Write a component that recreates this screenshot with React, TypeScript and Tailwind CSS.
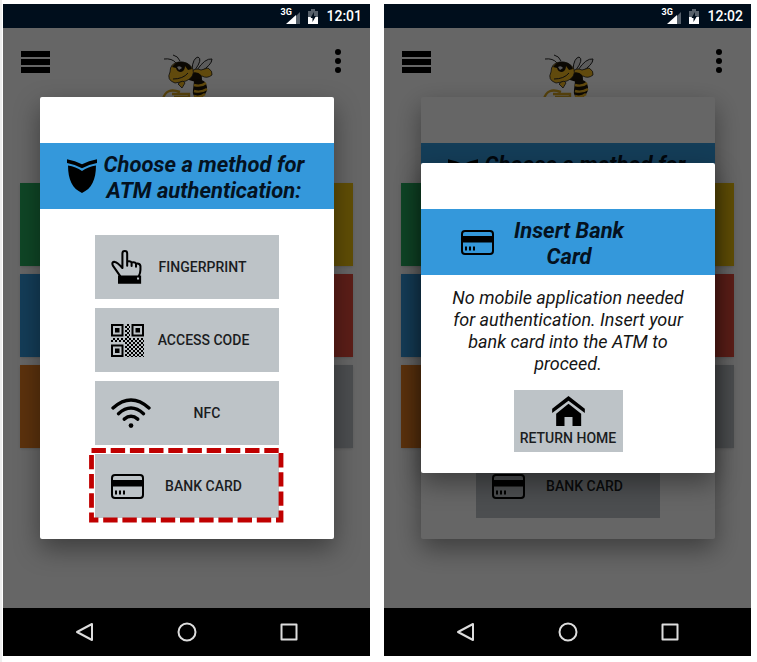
import type { ReactNode } from "react";

function CardIcon() {
  return (
    <svg width="33" height="25" viewBox="0 0 33 25" className="shrink-0" aria-hidden="true">
      <rect x="1" y="1" width="31" height="23" rx="3" fill="none" stroke="#000" strokeWidth="2" />
      <rect x="1" y="6" width="31" height="6.5" />
      <path d="M5 16.5v4M9 16.5v4M13 16.5v4" stroke="#000" strokeWidth="2" />
    </svg>
  );
}

function PointerIcon() {
  return (
    <svg width="31" height="34" viewBox="0 0 90 100" className="shrink-0" aria-hidden="true">
      <path
        d="M26 76 5 46Q0 34 11 35 18 36 33 53V10Q33 3 40 3 47 3 47 10V34Q57 31 60 37 70 34 73 40 84 38 86 47V58Q86 68 81 77M47 32V46M60 36V47M73 39V49"
        fill="none"
        stroke="#000"
        strokeWidth="6"
        strokeLinejoin="round"
        strokeLinecap="round"
      />
      <path fillRule="evenodd" d="M20 75H88V99H20ZM76 81V87H82V81Z" />
    </svg>
  );
}

function Finder({ x, y }: { x: number; y: number }) {
  return (
    <g transform={`translate(${x} ${y})`}>
      <rect x="1" y="1" width="10.5" height="10.5" fill="none" stroke="#000" strokeWidth="2" />
      <rect x="4" y="4" width="4.5" height="4.5" />
    </g>
  );
}

function QrIcon() {
  return (
    <svg width="33" height="33" viewBox="0 0 33 33" className="shrink-0" aria-hidden="true">
      <defs>
        <pattern id="checks" width="4" height="4" patternUnits="userSpaceOnUse">
          <path d="M0 0h2v2h2v2h-2v-2h-2z" />
        </pattern>
      </defs>
      <Finder x={0} y={0} />
      <Finder x={20.5} y={0} />
      <Finder x={0} y={20.5} />
      <path fill="url(#checks)" d="M14 0h5v14h-5zM0 14h33v4h-33zM14 18h19v15h-19z" />
    </svg>
  );
}

function WifiIcon() {
  return (
    <svg width="40" height="30" viewBox="0 0 118 88" className="shrink-0" aria-hidden="true">
      <g fill="none" stroke="#000" strokeWidth="10" strokeLinecap="round">
        <path d="M6 29Q59-18 112 29" />
        <path d="M22 46Q59 13 96 46" />
        <path d="M39 62Q59 45 79 62" />
      </g>
      <circle cx="59" cy="81" r="7" />
    </svg>
  );
}

function ShieldIcon() {
  return (
    <svg width="30" height="34" viewBox="0 0 88 99" className="shrink-0" aria-hidden="true">
      <path d="M0 0Q24 4 44 15 64 4 88 0V11Q64 15 44 27 24 15 0 11Z" />
      <path d="M3 19Q26 22 44 35 62 22 85 19C85 60 72 88 44 99 16 88 3 60 3 19Z" />
    </svg>
  );
}

function HouseIcon() {
  return (
    <svg width="33" height="30" viewBox="0 0 98 90" aria-hidden="true">
      <path d="M49 0 98 38V51L49 14 0 51V38Z" />
      <path d="M49 23 87 53V90H61V63H37V90H12V53Z" />
    </svg>
  );
}

function BeeLogo() {
  return (
    <svg width="63" height="55" viewBox="0 0 63 55" aria-hidden="true">
      <g fill="none" stroke="#222" strokeWidth="1">
        <path d="M21 18Q17 13 9 14M25 16Q23 11 18 10" />
        <path d="M37 24Q38 13 43 12 48 14 40 25M42 25Q50 13 57 14 57 20 45 27" fill="#e4e4e4" />
      </g>
      <path d="M35 28Q40 22 46 25L53 23Q58 26 57 30 52 34 47 31L40 34Z" fill="#f2b822" stroke="#222" strokeWidth=".8" />
      <path d="M33 29Q42 25 46 30 49 35 44 38L34 35Z" fill="#1c1408" />
      <path d="M39 36Q50 32 52 42 53 50 42 55 37 50 38 45Z" fill="#1c1408" />
      <path d="M39 40Q46 42 51 38M39 46Q46 48 52 44M39 51Q45 53 50 49" fill="none" stroke="#f2b822" strokeWidth="2.4" />
      <path d="M15 27Q15 18 24 17 33 16 38 24 40 32 31 36L20 38Q11 35 15 27Z" fill="#f2b822" stroke="#222" strokeWidth=".8" />
      <path d="M17 22Q21 16 28 17 35 18 37 24L33 25 30 21Q30 26 26 27 22 27 21 23Z" fill="#1c1408" />
      <path d="M22 22Q25 20 27 23L24 25Z" fill="#ddd" />
      <path d="M18 34Q28 34 33 28" fill="none" stroke="#222" strokeWidth="1" />
      <path d="M23 39Q28 34 30 38L27 43Z" fill="#f2b822" stroke="#222" strokeWidth=".8" />
      <path d="M25 47Q11 42 8 54M17 49H34V52H19" fill="none" stroke="#d8a620" strokeWidth="2.4" />
    </svg>
  );
}

function StatusBar({ time }: { time: string }) {
  return (
    <header className="flex h-6 items-center justify-end bg-[#000e1c] pr-2 text-white">
      <div className="relative mr-2 h-4 w-5">
        <span className="absolute left-0 top-0 text-[9px] leading-[9px] font-bold">3G</span>
        <svg width="15" height="12" viewBox="0 0 15 12" className="absolute right-0 bottom-0" aria-hidden="true">
          <path d="M15 0V12H11V4Z" fill="#56606a" />
          <path d="M11 3V12H1Z" fill="#fff" />
        </svg>
      </div>
      <svg width="10" height="15" viewBox="0 0 10 15" className="mr-2" aria-hidden="true">
        <path d="M3 0H7V2H10V8H0V2H3Z" fill="#56606a" />
        <path d="M0 8H10V15H0Z" fill="#fff" />
        <path d="M6 3 2.5 9H4.5V13L8 7H6Z" fill="#000e1c" />
      </svg>
      <span className="text-sm leading-6 font-medium">{time}</span>
    </header>
  );
}

function HomeScreen() {
  const tiles = [
    "bg-[#27ae60]",
    "bg-[#f1c40f]",
    "bg-[#3498db]",
    "bg-[#e74c3c]",
    "bg-[#e67e22]",
    "bg-[#bdc3c7]",
  ];
  return (
    <div className="col-start-1 row-start-1 bg-white">
      <div className="grid h-[155px] grid-cols-[1fr_auto_1fr] items-start pt-[17px] pr-[29px] pl-[18px]">
        <button aria-label="Menu" className="mt-1.5 flex w-[29px] flex-col gap-[2px]">
          <span className="h-1.5 w-full bg-black" />
          <span className="h-1.5 w-full bg-black" />
          <span className="h-1.5 w-full bg-black" />
        </button>
        <div className="ml-[11px]">
          <BeeLogo />
        </div>
        <button aria-label="More options" className="mt-1 flex flex-col gap-[3px] justify-self-end">
          <span className="size-1.5 rounded-full bg-black" />
          <span className="size-1.5 rounded-full bg-black" />
          <span className="size-1.5 rounded-full bg-black" />
        </button>
      </div>
      <div className="grid grid-cols-2 gap-2 px-[17px]">
        {tiles.map((tile) => (
          <div key={tile} className={`h-[83px] shadow-sm ${tile}`} />
        ))}
      </div>
    </div>
  );
}

function Scrim() {
  return <div className="isolate col-start-1 row-start-1 bg-black/60" />;
}

function Dialog({ icon, title, bandClass, titleClass, children }: {
  icon: ReactNode;
  title: string;
  bandClass: string;
  titleClass: string;
  children: ReactNode;
}) {
  return (
    <section className="isolate col-start-1 row-start-1 mr-9 ml-[37px] self-center rounded-xs bg-white pt-[46px] pb-[21px] shadow-[0_10px_26px_rgba(0,0,0,0.4)]">
      <div className={`flex h-[66px] items-center bg-[#3498db] ${bandClass}`}>
        {icon}
        <h2 className={`pt-1 text-center text-[22px] leading-[26px] font-bold text-[#04121f] italic ${titleClass}`}>{title}</h2>
      </div>
      {children}
    </section>
  );
}

function MethodButton({ icon, label, marked }: { icon: ReactNode; label: string; marked?: boolean }) {
  return (
    <button className={`flex h-16 w-full items-center bg-[#bdc3c7] px-4 text-sm font-medium text-[#1b1d1f] ${marked ? "relative" : ""}`}>
      {icon}
      <span className="flex-1 text-center">{label}</span>
      {marked && (
        <svg width="195" height="75" viewBox="0 0 195 75" className="absolute -top-1.5 -left-1.5 max-w-none" aria-hidden="true">
          <rect x="2.5" y="2.5" width="189.5" height="69.5" fill="none" stroke="#c00000" strokeWidth="4.8" strokeDasharray="14.4 4.8" />
        </svg>
      )}
    </button>
  );
}

/* When another dialog lies on top, the rows beneath it are hidden but keep their space. */
function MethodDialog({ marked, covered }: { marked?: boolean; covered?: boolean }) {
  return (
    <Dialog icon={<ShieldIcon />} title="Choose a method for ATM authentication:" bandClass="justify-center gap-1" titleClass="w-[206px]">
      <div className="mx-auto flex w-[184px] flex-col gap-[9px] pt-[26px]">
        <div className={`flex flex-col gap-[9px] ${covered ? "invisible" : ""}`}>
          <MethodButton icon={<PointerIcon />} label="FINGERPRINT" />
          <MethodButton icon={<QrIcon />} label="ACCESS CODE" />
          <MethodButton icon={<WifiIcon />} label="NFC" />
        </div>
        <MethodButton icon={<CardIcon />} label="BANK CARD" marked={marked} />
      </div>
    </Dialog>
  );
}

function InsertCardDialog() {
  return (
    <Dialog icon={<CardIcon />} title="Insert Bank Card" bandClass="pl-10" titleClass="ml-2.5 w-[130px]">
      <p className="px-6 pt-3 text-center text-lg leading-[22px] text-[#151515] italic">
        No mobile application needed for authentication. Insert your bank card into the ATM to proceed.
      </p>
      <button className="mx-auto mt-[15px] flex h-[62px] w-[109px] flex-col items-center bg-[#bdc3c7] pt-1.5 text-sm leading-6 font-medium text-[#1b1d1f]">
        <HouseIcon />
        RETURN HOME
      </button>
    </Dialog>
  );
}

function NavBar() {
  return (
    <nav className="flex h-12 items-center justify-center bg-black">
      <button aria-label="Back" className="flex w-[102px] justify-center">
        <svg width="20" height="20" viewBox="0 0 20 20" fill="none" stroke="#ddd" strokeWidth="2" strokeLinejoin="round">
          <path d="M17 2V18L2 10Z" />
        </svg>
      </button>
      <button aria-label="Home" className="flex w-[102px] justify-center">
        <svg width="20" height="20" viewBox="0 0 20 20" fill="none" stroke="#ddd" strokeWidth="2">
          <circle cx="10" cy="10" r="8.5" />
        </svg>
      </button>
      <button aria-label="Recent apps" className="flex w-[102px] justify-center">
        <svg width="20" height="20" viewBox="0 0 20 20" fill="none" stroke="#ddd" strokeWidth="2" strokeLinejoin="round">
          <rect x="2.5" y="2.5" width="15" height="15" />
        </svg>
      </button>
    </nav>
  );
}

function Phone({ time, children }: { time: string; children: ReactNode }) {
  return (
    <div className="min-w-0 flex-1">
      <StatusBar time={time} />
      <main className="grid min-h-[580px] overflow-hidden">
        <HomeScreen />
        {children}
      </main>
      <NavBar />
    </div>
  );
}

export default function App() {
  return (
    <div className="flex min-h-screen items-start gap-3.5 border-l-2 border-[#eeeeee] bg-white pt-1 pr-1.5 pl-px font-['Roboto',sans-serif]">
      <Phone time="12:01">
        <Scrim />
        <MethodDialog marked />
      </Phone>
      <Phone time="12:02">
        <MethodDialog covered />
        <Scrim />
        <InsertCardDialog />
      </Phone>
    </div>
  );
}
